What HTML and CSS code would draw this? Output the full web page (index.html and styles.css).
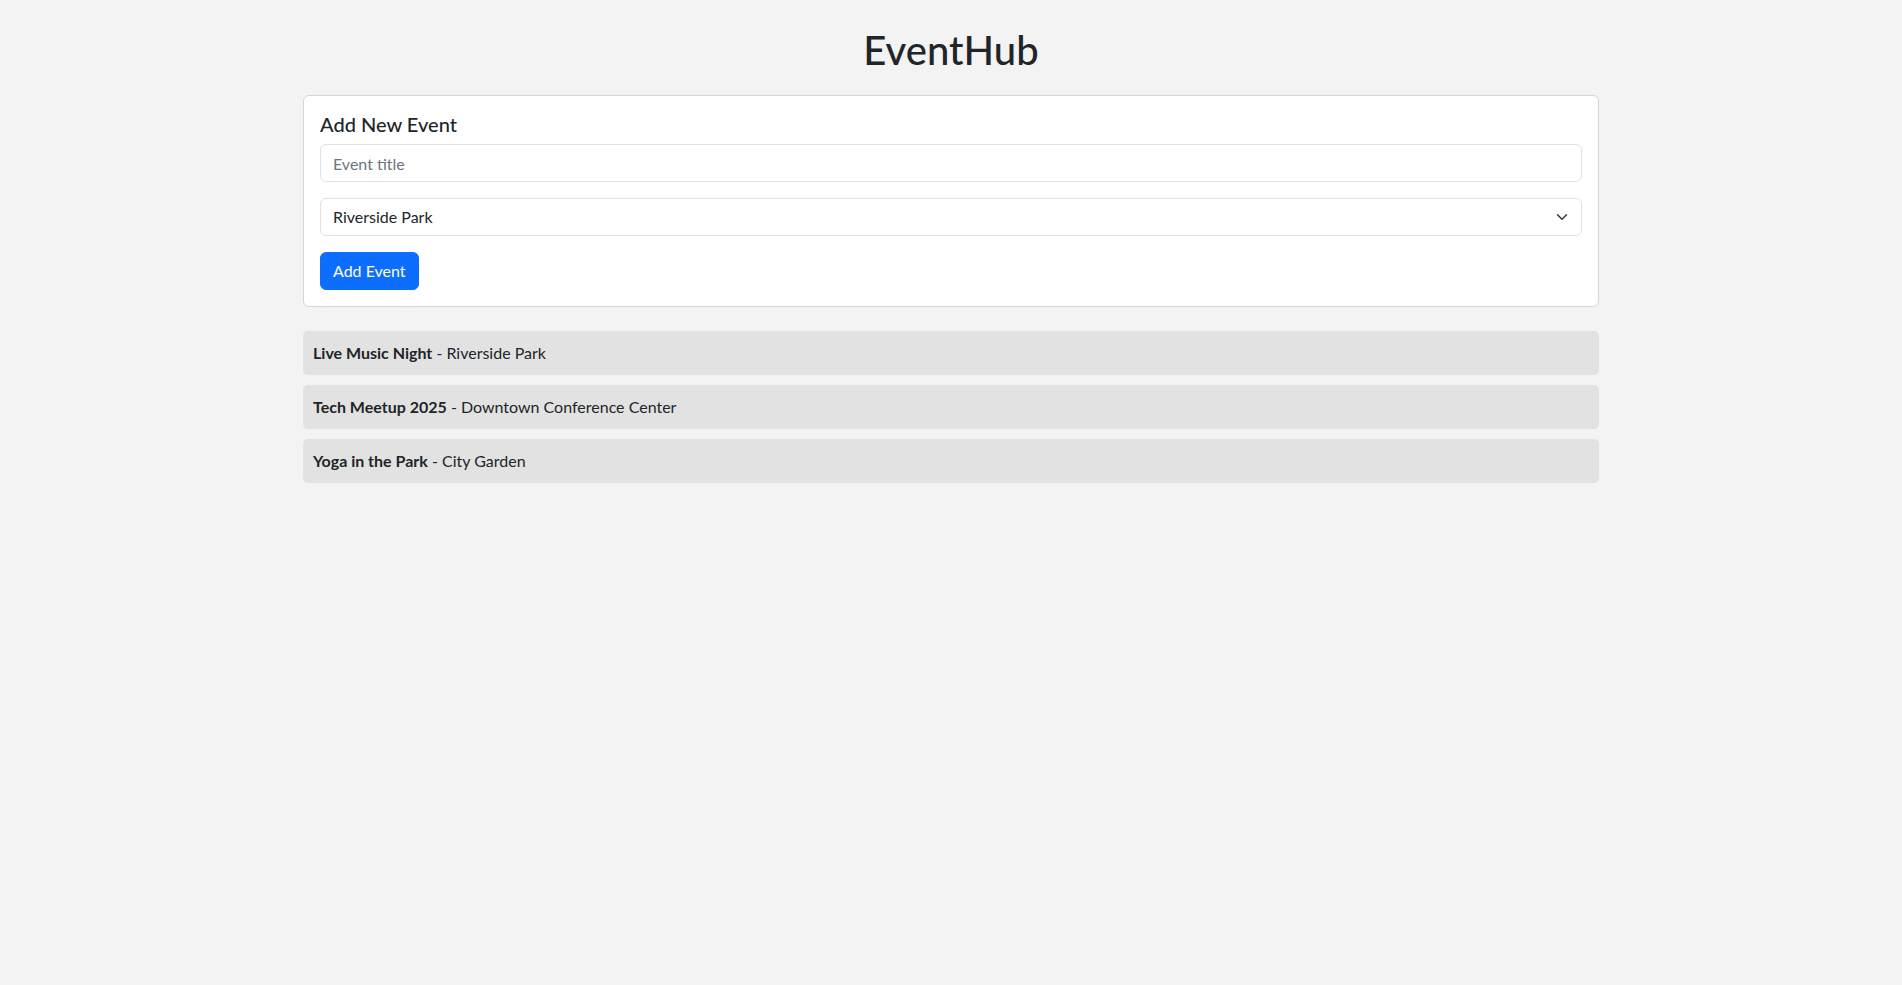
FILE: index.html
```html
<!DOCTYPE html>
<html lang="en">
<head>
<meta charset="utf-8">
<title>EventHub</title>
<link rel="stylesheet" href="styles.css">
</head>
<body>
<div class="container">
  <h1 class="page-title">EventHub</h1>
  <div class="card">
    <h5 class="card-title">Add New Event</h5>
    <input class="form-control" type="text" placeholder="Event title">
    <div class="select-wrap">
      <select class="form-select">
        <option>Riverside Park</option>
        <option>Downtown Conference Center</option>
        <option>City Garden</option>
      </select>
      <svg class="select-arrow" width="12" height="12" viewBox="0 0 16 16" aria-hidden="true"><path d="m2 5 6 6 6-6" fill="none" stroke="#343a40" stroke-width="2" stroke-linecap="round" stroke-linejoin="round"/></svg>
    </div>
    <button class="btn" type="button">Add Event</button>
  </div>
  <ul class="event-list">
    <li class="event-item"><strong>Live Music Night</strong> - Riverside Park</li>
    <li class="event-item"><strong>Tech Meetup 2025</strong> - Downtown Conference Center</li>
    <li class="event-item"><strong>Yoga in the Park</strong> - City Garden</li>
  </ul>
</div>
</body>
</html>
```
FILE: styles.css
```css
* { box-sizing: border-box; }
html, body { margin: 0; padding: 0; }
body {
  background: #f3f3f3;
  color: #212529;
  font-family: Lato, "Liberation Sans", sans-serif;
  font-size: 16px;
  line-height: 1.5;
}
.container {
  max-width: 1296px;
  margin: 0 auto;
  padding-top: 26px;
}
.page-title {
  font-size: 40px;
  font-weight: 500;
  line-height: 1.2;
  text-align: center;
  margin: 0 0 21px;
}
.card {
  background: #fff;
  border: 1px solid #d6d6d6;
  border-radius: 6px;
  padding: 16px;
  margin-bottom: 24px;
}
.card-title {
  font-size: 20px;
  font-weight: 500;
  line-height: 24px;
  margin: 0 0 8px;
}
.form-control, .form-select {
  display: block;
  width: 100%;
  height: 38px;
  padding: 6px 12px;
  font: inherit;
  font-size: 16px;
  line-height: 24px;
  color: #212529;
  background: #fff;
  border: 1px solid #dee2e6;
  border-radius: 6px;
  margin: 0 0 16px;
  outline: none;
}
.form-control::placeholder { color: #6c757d; opacity: 1; }
.select-wrap { position: relative; }
.form-select {
  appearance: none;
  -webkit-appearance: none;
  padding-right: 36px;
}
.select-arrow {
  position: absolute;
  right: 14px;
  top: 13px;
  width: 12px;
  height: 12px;
  pointer-events: none;
}
.btn {
  display: inline-block;
  height: 38px;
  padding: 6px 12px;
  font: inherit;
  font-size: 16px;
  line-height: 24px;
  color: #fff;
  background: #0d6efd;
  border: 1px solid #0d6efd;
  border-radius: 6px;
  cursor: pointer;
}
.event-list {
  list-style: none;
  margin: 0;
  padding: 0;
}
.event-item {
  background: #e2e2e2;
  border-radius: 5px;
  padding: 10px;
  margin-bottom: 10px;
}
.event-item strong { font-weight: 700; }
```
